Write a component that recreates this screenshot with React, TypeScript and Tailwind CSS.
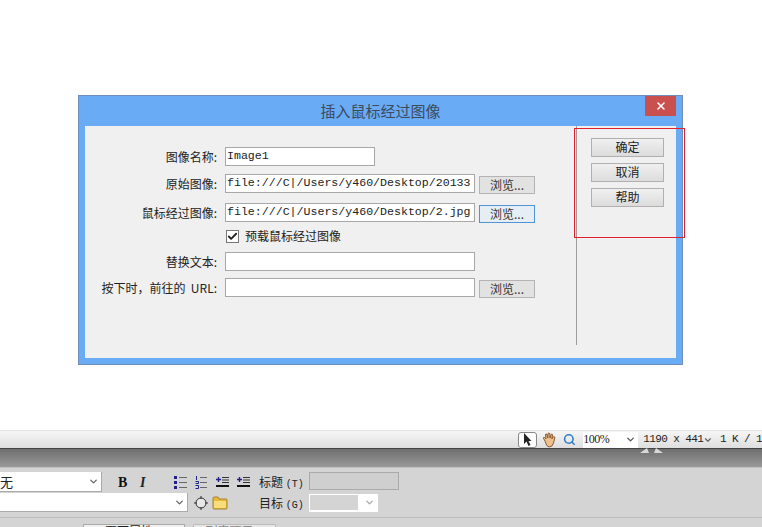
import React from "react";
import { Search, ChevronDown, X, Check } from "lucide-react";

const cjk = "font-['Noto_Sans_CJK_SC','Liberation_Sans',sans-serif]";
const mono = "font-['Liberation_Mono','Noto_Sans_CJK_SC',monospace]";

const Field: React.FC<{ value?: string; width?: string }> = ({ value, width = "w-[250px]" }) => (
    <div className={`${width} h-[19px] bg-white border border-[#a8a8a8] pl-[1px] text-[11.6px] leading-[16px] text-[#222] whitespace-nowrap overflow-hidden ${mono}`}>
        {value}
    </div>
);

const Browse: React.FC<{ focus?: boolean }> = ({ focus }) => (
    <div className={`w-[56px] h-[18px] ml-[4px] mt-[2px] self-start border ${focus ? "border-[#4f94d4] bg-[#e6eef5]" : "border-[#b4b4b4] bg-[#e2e2e2]"} text-[12px] leading-[16px] text-center text-[#333] ${cjk}`}>
        浏览...
    </div>
);

const Row: React.FC<{ label: string; top: string; children: React.ReactNode }> = ({ label, top, children }) => (
    <div className={`flex items-center h-[19px] ${top}`}>
        <div className={`w-[132px] text-right text-[12px] leading-[18px] text-[#222] whitespace-nowrap ${cjk}`}>{label}</div>
        <div className="w-[8px]" />
        {children}
    </div>
);

const SideButton: React.FC<{ label: string }> = ({ label }) => (
    <div className={`w-[73px] h-[19px] border border-[#b0b0b0] bg-gradient-to-b from-[#f0f0f0] to-[#dcdcdc] text-[12px] leading-[15px] text-center text-[#222] ${cjk}`}>
        {label}
    </div>
);

const Folder = () => (
    <svg width="16" height="14" viewBox="0 0 16 14">
        <path d="M1 3 L1 12 Q1 13 2 13 L14 13 Q15 13 15 12 L15 4 Q15 3 14 3 L7 3 L6 1 L2 1 Q1 1 1 3 Z" fill="#e8b83c" stroke="#a8842a" />
        <rect x="2" y="5" width="12" height="7" fill="#f8de78" />
    </svg>
);

const Target = () => (
    <svg width="14" height="14" viewBox="0 0 14 14" fill="none" stroke="#333" strokeWidth="1">
        <circle cx="7" cy="7" r="5" fill="#e8e8e8" />
        <path d="M7 0V3M7 11V14M0 7H3M11 7H14" />
    </svg>
);

const Arrow = () => (
    <svg width="14" height="15" viewBox="0 0 14 15">
        <path d="M4 1 L4 12 L6.5 9.5 L8.5 14 L10.5 13 L8.5 9 L11.5 9 Z" fill="#222" />
    </svg>
);

const HandIcon = () => (
    <svg width="15" height="16" viewBox="0 0 15 16">
        <path d="M3 9 L1.5 6.5 Q1 5 2.5 5.5 L4 7 L3.5 3 Q3.5 1.5 4.8 2 L5.8 6 L6 1.5 Q6.8 0.5 7.8 1.5 L8 6 L9.3 2.2 Q10.5 1.8 10.5 3 L9.8 7 L11.5 4.5 Q13 4.5 12.8 6 L11.5 11 Q10.5 15 7 15 Q4.5 15 3 9 Z" fill="#eec090" stroke="#8a5a30" strokeWidth="1" />
    </svg>
);

const BulletList = () => (
    <svg width="13" height="13" viewBox="0 0 13 13">
        <rect x="0" y="0" width="3" height="3" fill="#20208a" />
        <rect x="0" y="5" width="3" height="3" fill="#20208a" />
        <rect x="0" y="10" width="3" height="3" fill="#20208a" />
        <path d="M5 1.5H13M5 6.5H13M5 11.5H13" stroke="#666" />
    </svg>
);

const NumberList = () => (
    <svg width="12" height="13" viewBox="0 0 12 13">
        <path d="M1.5 0V4M0.5 5.5H3.5V7.5H0.5M0.5 9.5H3.5V12.5H0.5" stroke="#20208a" fill="none" />
        <path d="M5 1.5H12M5 6.5H12M5 11.5H12" stroke="#666" />
    </svg>
);

const IndentIcon = () => (
    <svg width="13" height="12" viewBox="0 0 13 12">
        <path d="M0 3.5H5M2.5 1V6" stroke="#20208a" strokeWidth="1.4" />
        <path d="M6 1.5H13M6 4H13M6 6.5H13" stroke="#333" />
        <path d="M0 10H13" stroke="#111" strokeWidth="2" />
    </svg>
);

const App: React.FC = () => {
    return (
        <div className="relative w-[762px] h-[527px] bg-white overflow-hidden flex flex-col">
            {/* dialog */}
            <div className="pt-[95px] pl-[78px]">
                <div className="relative w-[605px] h-[270px] bg-[#6aabf6] border border-[#6f8fb8] px-[6px] pb-[6px] flex flex-col">
                    <div className={`h-[30px] shrink-0 text-center text-[15px] leading-[30px] text-[#3c4a5c] ${cjk}`}>插入鼠标经过图像</div>
                    <div className="absolute top-0 right-[6px] w-[31px] h-[20px] bg-[#c9504e] flex items-center justify-center">
                        <X size={12} strokeWidth={3} color="#fff" />
                    </div>
                    <div className="flex-1 bg-[#f0f0f0] flex">
                        <div className="w-[491px] shrink-0 pt-[21px] flex flex-col">
                            <Row label="图像名称:" top="">
                                <Field value="Image1" width="w-[150px]" />
                            </Row>
                            <Row label="原始图像:" top="mt-[8px]">
                                <Field value="file:///C|/Users/y460/Desktop/20133" />
                                <Browse />
                            </Row>
                            <Row label="鼠标经过图像:" top="mt-[10px]">
                                <Field value="file:///C|/Users/y460/Desktop/2.jpg" />
                                <Browse focus />
                            </Row>
                            <div className="flex items-center h-[18px] mt-[5px] ml-[141px]">
                                <div className="w-[13px] h-[13px] bg-white border border-[#777] flex items-center justify-center">
                                    <Check size={11} strokeWidth={4} color="#222" />
                                </div>
                                <span className={`ml-[6px] text-[12px] leading-[18px] text-[#222] ${cjk}`}>预载鼠标经过图像</span>
                            </div>
                            <Row label="替换文本:" top="mt-[7px]">
                                <Field />
                            </Row>
                            <Row label={"按下时，前往的\u00a0\u00a0URL:"} top="mt-[7px]">
                                <Field />
                                <Browse />
                            </Row>
                        </div>
                        <div className="h-[219px] border-l border-[#9c9c9c] pl-[14px] pt-[12px] flex flex-col gap-[6px]">
                            <SideButton label="确定" />
                            <SideButton label="取消" />
                            <SideButton label="帮助" />
                        </div>
                    </div>
                </div>
            </div>

            {/* status bar */}
            <div className={`mt-[65px] h-[18px] border-t border-[#e4e4e4] bg-gradient-to-b from-[#f6f6f6] to-[#dedede] flex items-center pl-[518px] text-[11px] tracking-[-0.6px] text-[#222] ${mono}`}>
                <div className="w-[19px] h-[16px] bg-white border border-[#888] rounded-[3px] flex items-center justify-center">
                    <Arrow />
                </div>
                <span className="ml-[5px]"><HandIcon /></span>
                <Search size={13} color="#2f7fc8" strokeWidth={3} className="ml-[6px]" />
                <div className="ml-[8px] w-[56px] h-[16px] bg-white flex items-center justify-between pr-[2px] text-[#222] text-[12px] leading-[15px] tracking-[-0.5px]">
                    <span className="font-['Liberation_Serif',serif]">100%</span>
                    <ChevronDown size={11} strokeWidth={3} color="#555" />
                </div>
                <span className="ml-[5px] whitespace-nowrap">1190 x 441</span>
                <ChevronDown size={10} strokeWidth={3} color="#666" />
                <span className="ml-[7px] whitespace-nowrap">1 K / 1</span>
            </div>
            <div className="h-[19px] border-t border-[#444] bg-gradient-to-b from-[#6e6e6e] to-[#999]" />

            {/* properties panel */}
            <div className="h-[51px] bg-[#d4d4d4] border-t border-[#c0c0c0] border-b border-b-[#bdbdbd] flex flex-col pt-[4px]">
                <div className="h-[20px] flex items-center">
                    <div className={`w-[102px] h-[20px] bg-white border-b border-r border-[#aaa] flex items-center justify-between pr-[2px] text-[13px] text-[#222] ${cjk}`}>
                        <span>无</span>
                        <ChevronDown size={11} strokeWidth={3} color="#666" />
                    </div>
                    <span className="ml-[16px] w-[22px] font-['Liberation_Serif',serif] font-bold text-[14px] text-[#111]">B</span>
                    <span className="w-[34px] font-['Liberation_Serif',serif] italic font-bold text-[14px] text-[#222]">I</span>
                    <BulletList />
                    <span className="ml-[8px]"><NumberList /></span>
                    <span className="ml-[9px]"><IndentIcon /></span>
                    <span className="ml-[8px]"><IndentIcon /></span>
                    <span className={`ml-[9px] w-[50px] text-[12px] text-[#222] whitespace-nowrap ${cjk}`}>标题 <span className={`text-[10px] ${mono}`}>(T)</span></span>
                    <div className="w-[90px] h-[18px] self-start bg-[#cfcfcf] border border-[#aaa]" />
                </div>
                <div className="h-[19px] flex items-center mt-[1px]">
                    <div className="w-[188px] h-[19px] bg-white border-b border-r border-[#aaa] flex items-center justify-end pr-[2px]">
                        <ChevronDown size={11} strokeWidth={3} color="#666" />
                    </div>
                    <span className="ml-[6px]"><Target /></span>
                    <span className="ml-[4px]"><Folder /></span>
                    <span className={`ml-[31px] mt-[2px] w-[50px] text-[12px] text-[#222] whitespace-nowrap ${cjk}`}>目标 <span className={`text-[10px] ${mono}`}>(G)</span></span>
                    <div className="w-[69px] h-[18px] bg-white flex items-center justify-between pl-[1px] pr-[3px]">
                        <div className="w-[48px] h-[15px] bg-[#d4d4d4]" />
                        <ChevronDown size={11} strokeWidth={3} color="#aaa" />
                    </div>
                </div>
            </div>
            <div className="flex-1 bg-[#d4d4d4] flex pt-[6px] pl-[83px] gap-[8px] overflow-hidden">
                <div className={`w-[102px] h-[18px] bg-[#efefef] border border-[#aaa] text-center text-[12px] leading-[12px] text-[#222] ${cjk}`}>页面属性...</div>
                <div className={`w-[83px] h-[18px] bg-[#e6e6e6] border border-[#bbb] text-center text-[12px] leading-[12px] text-[#888] ${cjk}`}>列表项目...</div>
            </div>

            {/* drag marker over the bar edge */}
            <svg className="absolute left-[640px] top-[448px]" width="23" height="5" viewBox="0 0 23 5">
                <path d="M0 5 L7 0 L9 5 Z M14 5 L16 0 L23 5 Z" fill="#d8d8d8" />
            </svg>

            {/* red annotation box */}
            <div className="absolute left-[574px] top-[128px] w-[111px] h-[110px] border border-[#e0202c]" />
        </div>
    );
};

export default App;
